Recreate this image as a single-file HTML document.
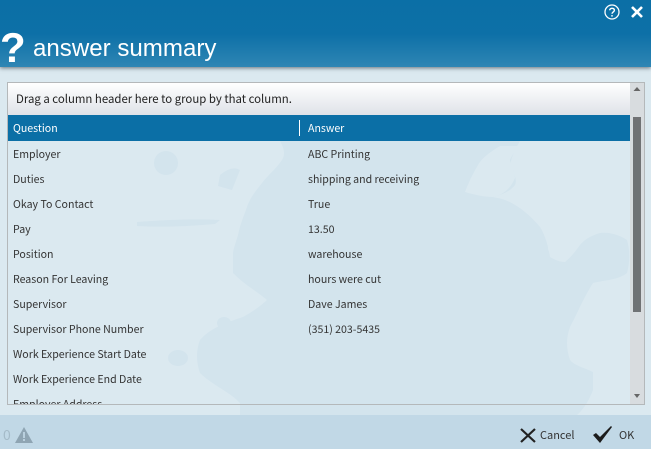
<!DOCTYPE html>
<html><head><meta charset="utf-8"><style>
html,body{margin:0;padding:0}
body{width:651px;height:449px;overflow:hidden;position:relative;background:#dbe9f0;font-family:"Noto Sans CJK JP","Liberation Sans",sans-serif;font-size:10.6px;color:#333}
div{position:absolute}
.hdr{left:0;top:0;width:651px;height:67px;background:linear-gradient(#0b6fa6 0,#0d70a7 34px,#2f86b4 67px);box-shadow:0 1px 4px rgba(40,50,60,.65)}
.q{left:0;top:24px;font:bold 42px "Liberation Sans",sans-serif;color:#fff;line-height:48px}
.t{left:33px;top:34px;font:24.1px "Liberation Sans",sans-serif;color:#fff;line-height:30px}
.grid{left:7px;top:82px;width:636px;height:321px;border:1px solid #b4b8ba;overflow:hidden}
.grp{left:0;top:0;width:622px;height:32px;background:linear-gradient(#fff,#dfe2e8);line-height:33px;padding-left:8px;box-sizing:border-box;color:#222;font-size:11.4px}
.h{left:0;top:32px;width:622px;height:26px;background:#0b6fa6;color:#fff;line-height:26px}
.c{white-space:nowrap;line-height:16px}
.sb{left:622px;top:0;width:14px;height:321px;background:#d8dcdf}
.th{left:3px;top:34px;width:8px;height:195px;background:#707274}
.f{left:0;top:415px;width:651px;height:34px;background:#c1d8e6}
</style></head><body>
<svg style="position:absolute;left:0;top:0" width="651" height="449"><g fill="#d3e4ed"><path d="M280 141C285 150 285 155 282 160C275 170 268 175 262 183C255 192 250 198 247 207C243 218 240 225 238 235C236 242 234 247 233 253L233 273C245 285 255 290 267 300C258 308 252 312 243 317C228 322 210 328 200 340C196 350 196 362 200 373C212 385 230 392 240 403L240 415L577 415C585 408 590 398 593 390L593 372C585 368 575 366 570 360C566 348 566 338 570 327C578 312 585 295 593 283C605 280 618 280 627 273C630 262 630 250 627 240C618 234 608 232 600 233C590 236 584 240 580 245C575 252 570 258 565 262C560 262 555 260 550 257C548 245 545 235 540 227C530 215 518 205 505 200C500 198 496 198 493 197C500 195 510 192 515 185C518 178 512 172 510 165C512 155 516 148 520 141Z"/><ellipse cx="166" cy="163" rx="12" ry="12"/><ellipse cx="178" cy="358" rx="10" ry="8"/><ellipse cx="224" cy="323" rx="7" ry="6"/><path d="M137 222Q190 218 220 220L215 224Q170 228 137 226Z"/><path d="M220 175Q232 165 240 170L232 190L218 186Z"/></g><g fill="#dbe9f0"><path d="M500 146C490 152 482 158 478 165C472 175 468 184 465 192C475 195 485 197 493 197C502 195 510 190 515 178C514 170 510 165 510 160C512 155 516 150 520 146Z"/><circle cx="555" cy="248" r="7"/><circle cx="571" cy="247" r="5"/></g></svg>
<div class="hdr"></div>
<div class="q">?</div><div class="t">answer summary</div>
<svg style="position:absolute;left:604px;top:4px" width="44" height="17" fill="none" stroke="#fff"><circle cx="8" cy="8" r="7" stroke-width="1.3"/><path d="M5.7 6.300C5.700 3.700 10.400 3.600 10.400 6.200C10.400 7.900 8 7.900 8 9.800" stroke-width="1.400"/><path d="M8 11v1.600" stroke-width="1.400"/><path d="M28 3l10 10M38 3L28 13" stroke-width="2.600"/></svg>
<div class="grid">
<div class="grp">Drag a column header here to group by that column.</div>
<div class="h"><div class="c" style="left:5px;top:6px">Question</div><div style="left:291px;top:5px;width:1px;height:16px;background:#fff"></div><div class="c" style="left:300px;top:6px">Answer</div></div>
<div class="c" style="left:5px;top:64px">Employer</div><div class="c" style="left:300px;top:64px">ABC Printing</div>
<div class="c" style="left:5px;top:89px">Duties</div><div class="c" style="left:300px;top:89px">shipping and receiving</div>
<div class="c" style="left:5px;top:114px">Okay To Contact</div><div class="c" style="left:300px;top:114px">True</div>
<div class="c" style="left:5px;top:139px">Pay</div><div class="c" style="left:300px;top:139px">13.50</div>
<div class="c" style="left:5px;top:164px">Position</div><div class="c" style="left:300px;top:164px">warehouse</div>
<div class="c" style="left:5px;top:189px">Reason For Leaving</div><div class="c" style="left:300px;top:189px">hours were cut</div>
<div class="c" style="left:5px;top:214px">Supervisor</div><div class="c" style="left:300px;top:214px">Dave James</div>
<div class="c" style="left:5px;top:239px">Supervisor Phone Number</div><div class="c" style="left:300px;top:239px">(351) 203-5435</div>
<div class="c" style="left:5px;top:264px">Work Experience Start Date</div>
<div class="c" style="left:5px;top:289px">Work Experience End Date</div>
<div class="c" style="left:5px;top:314px">Employer Address</div>
<div class="sb"><div class="th"></div>
<svg style="position:absolute;left:0;top:0" width="14" height="321" fill="#666"><path d="M3.500 8L7 4L10.500 8Z"/><path d="M4 311H10L7 315Z"/></svg></div>
</div>
<div class="f"></div>
<div class="c" style="left:3px;top:427px;font-size:14px;color:#a5bbc8">0</div>
<svg style="position:absolute;left:15px;top:427px" width="18" height="16"><path d="M9 0L18 16H0Z" fill="#8fa5b3"/><path d="M9 5v6M9 12v2" stroke="#c1d8e6" stroke-width="1.700"/></svg>
<svg style="position:absolute;left:520px;top:428px" width="16" height="15" fill="none" stroke="#222" stroke-width="2.200"><path d="M1 1L15 14M15 1L1 14"/></svg>
<div class="c" style="left:540px;top:427px;color:#333;font-size:11px">Cancel</div>
<svg style="position:absolute;left:593px;top:426px" width="20" height="17"><path d="M0 9L3 7L7 11L18 0L19 1L7 17Z" fill="#1c1c1c"/></svg>
<div class="c" style="left:619px;top:427px;color:#333;font-size:11px">OK</div>
</body></html>
